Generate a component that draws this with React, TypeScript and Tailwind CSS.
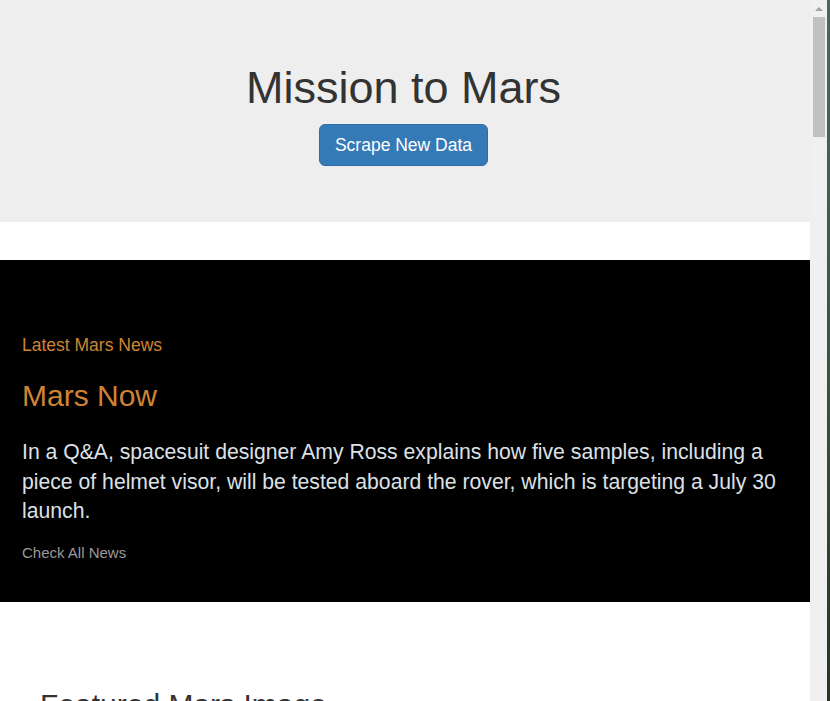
import React from 'react';

const font = { fontFamily: '"Liberation Sans", Arial, sans-serif' };

const Scrollbar = () => (
  <div className="w-[17px] h-full bg-[#f0f0f0] flex flex-col items-center shrink-0">
    <div className="h-[17px] w-full flex items-center justify-center">
      <div className="w-0 h-0 border-l-[4px] border-r-[4px] border-b-[4px] border-l-transparent border-r-transparent border-b-[#a3a3a3]" />
    </div>
    <div className="w-[12px] h-[120px] bg-[#c1c1c1]" />
  </div>
);

export default function App() {
  return (
    <div className="w-[830px] h-[701px] overflow-hidden flex bg-white" style={font}>
      <div className="w-[810px] h-full flex flex-col shrink-0">
        {/* Jumbotron */}
        <div className="h-[222px] bg-[#eeeeee] flex flex-col items-center pt-[63px] pr-[3px] shrink-0">
          <h1 className="text-[45px] leading-[50px] text-[#333333]">Mission to Mars</h1>
          <button className="mt-[11px] h-[42px] w-[169px] rounded-[6px] bg-[#337ab7] border border-[#2e6da4] text-white text-[17.5px]">
            Scrape New Data
          </button>
        </div>

        {/* News */}
        <div className="mt-[38px] h-[342px] bg-black px-[22px] pt-[75px] shrink-0">
          <p className="text-[17.5px] leading-[20px] text-[#cf8434]">Latest Mars News</p>
          <h2 className="mt-[24px] text-[30px] leading-[33px] text-[#cf8434]">Mars Now</h2>
          <p className="mt-[25px] text-[21.2px] leading-[29.5px] text-[#dde0e6]">
            In a Q&amp;A, spacesuit designer Amy Ross explains how five samples, including a piece of helmet visor, will be tested aboard the rover, which is targeting a July 30 launch.
          </p>
          <a className="block mt-[17px] text-[15px] leading-[20px] text-[#9a9a9a]">Check All News</a>
        </div>

        {/* Featured image */}
        <div className="pt-[86px] pl-[40px]">
          <h2 className="text-[30px] leading-[33px] text-[#333333]">Featured Mars Image</h2>
        </div>
      </div>
      <Scrollbar />
      <div className="w-[3px] h-full bg-gradient-to-b from-[#4b685b] via-[#3c5445] to-[#2b3323]" />
    </div>
  );
}
